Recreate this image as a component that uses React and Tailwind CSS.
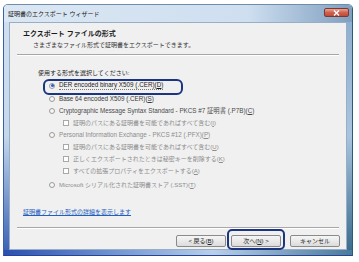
import React from "react";

const font = { fontFamily: '"Liberation Sans", "Noto Sans CJK JP", sans-serif' };

const Radio = ({ checked }) => (
  <span className="w-[6px] h-[6px] rounded-full border border-[#9a9a9a] bg-[#f6f6f6] flex items-center justify-center shrink-0">
    {checked && <span className="w-[3px] h-[3px] rounded-full bg-[#2a5fc8]" />}
  </span>
);

const Check = () => (
  <span className="w-[6px] h-[6px] border border-[#a8a8a8] bg-white shrink-0" />
);

const Button = ({ children, focus }) => (
  <div className="relative">
    <div className="w-[50px] h-[12px] rounded-[2px] border border-[#8a8a8a] bg-linear-to-b from-[#f6f6f6] to-[#dcdcdc] flex items-center justify-center text-[6px] leading-none text-[#222]">
      {children}
    </div>
    {focus && (
      <div className="absolute -left-[4px] -top-[6px] w-[58px] h-[21px] rounded-[5px] border-2 border-[#1b3580]" />
    )}
  </div>
);

export default function App() {
  return (
    <div className="w-[359px] h-[262px] bg-white overflow-hidden pt-[4px] pl-[3px]" style={font}>
      {/* window */}
      <div className="w-[350px] h-[252px] flex flex-col rounded-t-[5px] border border-[#6f8dab] border-r-[#2d5a78] border-b-[#24449a] border-l-[#3b5fa8] overflow-hidden">
        {/* title bar */}
        <div className="h-[17px] flex justify-between bg-linear-to-r from-[#dbe7f3] via-[#cfdff0] via-70% to-[#7f9fbf]">
          <div className="pl-[4px] pt-[2px] flex items-center text-[6px] text-[#1a1a1a]">証明書のエクスポート ウィザード</div>
          <div className="mt-[3px] mr-[3px] w-[25px] h-[9px] rounded-[2px] border border-[#7a3a34] bg-linear-to-b from-[#e8a597] via-[#d0604f] to-[#c24a36] flex items-center justify-center">
            <svg width="7" height="6" viewBox="0 0 7 6">
              <path d="M1 0.5 L6 5.5 M6 0.5 L1 5.5" stroke="white" strokeWidth="1.4" />
            </svg>
          </div>
        </div>
        <div className="flex-1 flex">
          {/* left frame */}
          <div className="w-[5px] bg-linear-to-b from-[#cfdff0] via-[#c5d8eb] to-[#3f64b4]" />
          {/* content */}
          <div className="flex-1 flex flex-col bg-[#f0f0f0] border border-[#98aec6] text-[6px] leading-[10px] text-[#222]">
            <div className="pt-[6px] pl-[13px] text-[7px] font-bold leading-[10px] text-[#1a1a1a]">エクスポート ファイルの形式</div>
            <div className="mt-[1px] pl-[23px] text-[#333]">さまざまなファイル形式で証明書をエクスポートできます。</div>
            <div className="mt-[4px] mx-[7px] h-px bg-[#a7a7a7]" />
            <div className="mx-[7px] h-px bg-white" />

            <div className="mt-[12px] pl-[28px] text-[#222]">使用する形式を選択してください:</div>

            <div className="mt-[1px] flex flex-col">
              <div className="relative h-[13px] pl-[39px] flex items-center gap-[4px] text-[#1a1a1a]">
                <Radio checked />
                <span className="border-b border-dotted border-[#777] leading-[8px] text-[6.3px]">DER encoded binary X509 (.CER)(<u>D</u>)</span>
                <div className="absolute left-[33px] top-0 w-[140px] h-[16px] rounded-[6px] border-2 border-[#1b3580]" />
              </div>
              <div className="h-[13px] pl-[39px] flex items-center gap-[4px] text-[#3a3a3a]">
                <Radio />
                <span className="text-[6.3px]">Base 64 encoded X509 (.CER)(<u>S</u>)</span>
              </div>
              <div className="h-[12px] pl-[39px] flex items-center gap-[4px] text-[#4a4a4a]">
                <Radio />
                <span className="text-[6.3px]">Cryptographic Message Syntax Standard - PKCS #7 証明書 (.P7B)(<u>C</u>)</span>
              </div>
              <div className="h-[12px] pl-[53px] flex items-center gap-[4px] text-[#8c8c8c]">
                <Check />
                <span>証明のパスにある証明書を可能であればすべて含む(<u>I</u>)</span>
              </div>
              <div className="h-[12px] pl-[39px] flex items-center gap-[4px] text-[#8c8c8c]">
                <Radio />
                <span className="text-[6.3px]">Personal Information Exchange - PKCS #12 (.PFX)(<u>P</u>)</span>
              </div>
              <div className="h-[12px] pl-[53px] flex items-center gap-[4px] text-[#8c8c8c]">
                <Check />
                <span>証明のパスにある証明書を可能であればすべて含む(<u>U</u>)</span>
              </div>
              <div className="h-[12px] pl-[53px] flex items-center gap-[4px] text-[#8c8c8c]">
                <Check />
                <span>正しくエクスポートされたときは秘密キーを削除する(<u>K</u>)</span>
              </div>
              <div className="h-[12px] pl-[53px] flex items-center gap-[4px] text-[#8c8c8c]">
                <Check />
                <span>すべての拡張プロパティをエクスポートする(<u>A</u>)</span>
              </div>
              <div className="mt-[2px] h-[12px] pl-[39px] flex items-center gap-[4px] text-[#8c8c8c]">
                <Radio />
                <span>Microsoft シリアル化された証明書ストア (.SST)(<u>T</u>)</span>
              </div>
            </div>

            <div className="mt-[16px] pl-[13px]">
              <a href="#" className="text-[#1f5fbf] underline">証明書ファイル形式の詳細を表示します</a>
            </div>

            <div className="mt-[10px] mx-[7px] h-px bg-[#a7a7a7]" />
            <div className="mx-[7px] h-px bg-white" />

            <div className="mt-[6px] pr-[6px] flex justify-end">
              <Button>&lt; 戻る(<u>B</u>)</Button>
              <div className="ml-[5px]">
                <Button focus>次へ(<u>N</u>) &gt;</Button>
              </div>
              <div className="ml-[9px]">
                <Button>キャンセル</Button>
              </div>
            </div>
          </div>
          {/* right frame */}
          <div className="w-[5px] bg-linear-to-b from-[#8fb0cf] via-[#a9c4de] to-[#3d6d8e]" />
        </div>
        {/* bottom frame */}
        <div className="h-[5px] bg-linear-to-r from-[#2b4fb0] via-[#b9d0e8] via-60% to-[#4a7a9c]" />
      </div>
    </div>
  );
}
